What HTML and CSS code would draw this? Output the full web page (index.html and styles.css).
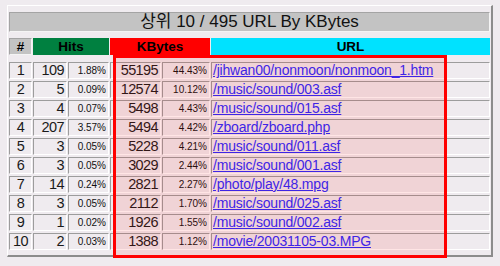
FILE: index.html
```html
<!DOCTYPE html>
<html>
<head>
<meta charset="utf-8">
<link rel="stylesheet" href="styles.css">
</head>
<body>
<div class="wrap">
  <div class="panel">
    <div class="grid">
      <div class="title">상위 10 / 495 URL By KBytes</div>
      <div class="hd hd-num">#</div>
      <div class="hd hd-hits">Hits</div>
      <div class="hd hd-kb">KBytes</div>
      <div class="hd hd-url">URL</div>

      <div class="c n">1</div><div class="c r">109</div><div class="c p">1.88%</div><div class="c r">55195</div><div class="c p">44.43%</div><div class="c u"><a href="#">/jihwan00/nonmoon/nonmoon_1.htm</a></div>
      <div class="c n">2</div><div class="c r">5</div><div class="c p">0.09%</div><div class="c r">12574</div><div class="c p">10.12%</div><div class="c u"><a href="#">/music/sound/003.asf</a></div>
      <div class="c n">3</div><div class="c r">4</div><div class="c p">0.07%</div><div class="c r">5498</div><div class="c p">4.43%</div><div class="c u"><a href="#">/music/sound/015.asf</a></div>
      <div class="c n">4</div><div class="c r">207</div><div class="c p">3.57%</div><div class="c r">5494</div><div class="c p">4.42%</div><div class="c u"><a href="#">/zboard/zboard.php</a></div>
      <div class="c n">5</div><div class="c r">3</div><div class="c p">0.05%</div><div class="c r">5228</div><div class="c p">4.21%</div><div class="c u"><a href="#">/music/sound/011.asf</a></div>
      <div class="c n">6</div><div class="c r">3</div><div class="c p">0.05%</div><div class="c r">3029</div><div class="c p">2.44%</div><div class="c u"><a href="#">/music/sound/001.asf</a></div>
      <div class="c n">7</div><div class="c r">14</div><div class="c p">0.24%</div><div class="c r">2821</div><div class="c p">2.27%</div><div class="c u"><a href="#">/photo/play/48.mpg</a></div>
      <div class="c n">8</div><div class="c r">3</div><div class="c p">0.05%</div><div class="c r">2112</div><div class="c p">1.70%</div><div class="c u"><a href="#">/music/sound/025.asf</a></div>
      <div class="c n">9</div><div class="c r">1</div><div class="c p">0.02%</div><div class="c r">1926</div><div class="c p">1.55%</div><div class="c u"><a href="#">/music/sound/002.asf</a></div>
      <div class="c n">10</div><div class="c r">2</div><div class="c p">0.03%</div><div class="c r">1388</div><div class="c p">1.12%</div><div class="c u"><a href="#">/movie/20031105-03.MPG</a></div>
    </div>
  </div>
  <div class="mark"></div>
</div>
</body>
</html>
```

FILE: styles.css
```css
html, body {
  margin: 0;
  padding: 0;
  background: #efebef;
}
body {
  font-family: "Liberation Sans", "Noto Sans CJK KR", sans-serif;
  color: #000;
}
.wrap {
  position: relative;
  padding: 5px 0 0 7px;
  width: 500px;
  height: 266px;
  box-sizing: border-box;
}
.panel {
  display: inline-block;
  vertical-align: top;
  border-top: 1px solid #ffffff;
  border-left: 1px solid #ffffff;
  border-right: 2px solid #8c8c8c;
  border-bottom: 2px solid #8c8c8c;
  padding: 6px 1px 5px 1px;
}
.grid {
  display: grid;
  grid-template-columns: 23px 34px 41px 51px 48px 279px;
  grid-template-rows: 24px 22px repeat(10, 17px);
  column-gap: 1px;
  row-gap: 2px;
}
.title {
  grid-column: 1 / 7;
  align-self: start;
  height: 20px;
  background: #c3c3c3;
  border-top: 1px solid #a4a4a4;
  border-left: 1px solid #a4a4a4;
  border-bottom: 1px solid #f4f4f4;
  border-right: 1px solid #f4f4f4;
  box-sizing: border-box;
  font-size: 17px;
  line-height: 18px;
  text-align: center;
  color: #111;
}
.hd {
  align-self: start;
  height: 17px;
  box-sizing: border-box;
  font-size: 13.5px;
  font-weight: bold;
  line-height: 17px;
  text-align: center;
  color: #000;
}
.hd-num {
  background: #c3c3c3;
  border-top: 1px solid #a4a4a4;
  border-left: 1px solid #a4a4a4;
  border-bottom: 1px solid #f4f4f4;
  border-right: 1px solid #f4f4f4;
  line-height: 15px;
}
.hd-hits {
  grid-column: 2 / 4;
  background: #008040;
}
.hd-kb {
  grid-column: 4 / 6;
  background: #ff0000;
}
.hd-url {
  background: #00e2ff;
}
.c {
  box-sizing: border-box;
  border-top: 1px solid #9c9c9c;
  border-left: 1px solid #9c9c9c;
  border-bottom: 1px solid #ffffff;
  border-right: 1px solid #ffffff;
  background: #efebef;
  font-size: 14.5px;
  letter-spacing: -0.6px;
  line-height: 15px;
  color: #1a1a1a;
  white-space: nowrap;
  overflow: hidden;
}
.n {
  text-align: center;
}
.r {
  text-align: right;
  padding-right: 2px;
}
.p {
  text-align: right;
  padding-right: 2px;
  font-size: 10px;
  letter-spacing: 0;
  line-height: 16px;
  color: #111;
}
.u {
  padding-left: 1px;
  letter-spacing: 0;
}
.u a {
  color: #2a2aff;
  font-size: 14px;
  letter-spacing: -0.2px;
  text-decoration: underline;
}
.mark {
  position: absolute;
  left: 113px;
  top: 55px;
  width: 334px;
  height: 203px;
  box-sizing: border-box;
  border: 3px solid #ff0000;
  background: rgba(255, 0, 0, 0.1);
}
```
